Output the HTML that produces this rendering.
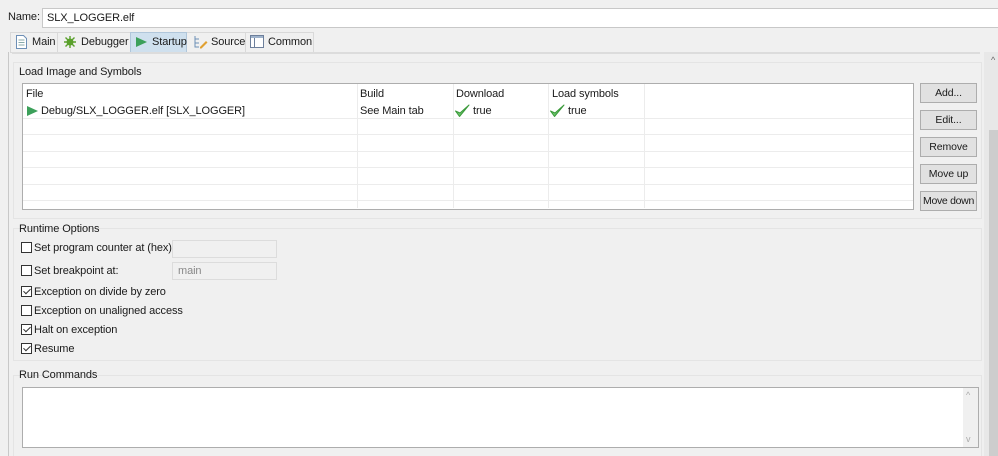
<!DOCTYPE html>
<html><head><style>
*{box-sizing:border-box;margin:0;padding:0}
html,body{width:998px;height:456px;overflow:hidden}
body{background:#f0f0f0;font-family:"Liberation Sans",sans-serif;font-size:11px;color:#1a1a1a;position:relative;white-space:nowrap;letter-spacing:-0.1px}
.a{position:absolute}
.cb{position:absolute;width:11px;height:11px;border:1px solid #333;background:#fff;left:21px}
.cb.c::after{content:"";position:absolute;left:3px;top:0px;width:3px;height:6px;border:solid #333;border-width:0 1px 1px 0;transform:rotate(45deg)}
.lbl{position:absolute;left:34px}
.btn{position:absolute;left:920px;width:57px;height:20px;background:#e1e1e1;border:1px solid #adadad;text-align:center;line-height:18px;font-size:10.5px}
.hl{position:absolute;left:23px;width:890px;height:1px;background:#ececec}
.vl{position:absolute;top:84px;height:124px;width:1px;background:#ececec}
</style></head><body>
<div class="a" style="left:8px;top:11px">Name:</div>
<div class="a" style="left:42px;top:8px;width:960px;height:20px;background:#fff;border:1px solid #c8c8c8;padding:3px 4px">SLX_LOGGER.elf</div>
<!-- tabs -->
<div class="a" style="left:10px;top:32px;width:304px;height:21px;background:#f0f0f0;border:1px solid #d9d9d9"></div>
<div class="a" style="left:130px;top:32px;width:57px;height:21px;background:#cfe0ee;border:1px solid #b0c6da"></div>
<svg class="a" style="left:15px;top:35px" width="13" height="14"><path d="M1.5 .5h7l3 3v10h-10z" fill="#fff" stroke="#6d8fb6"/><path d="M3.5 5h6M3.5 7.5h6M3.5 10h6" stroke="#8aa"/></svg>
<div class="a" style="left:32px;top:36px">Main</div>
<div class="a" style="left:57px;top:33px;width:1px;height:19px;background:#d9d9d9"></div>
<svg class="a" style="left:63px;top:35px" width="14" height="14"><circle cx="7" cy="7" r="3.5" fill="#5aa02c"/><path d="M7 1v12M1 7h12M2.5 2.5l9 9M11.5 2.5l-9 9" stroke="#5aa02c" stroke-width="1.4"/></svg>
<div class="a" style="left:81px;top:36px">Debugger</div>
<svg class="a" style="left:135px;top:36px" width="13" height="12"><path d="M1 1l11 5-11 5z" fill="#3ca05a"/></svg>
<div class="a" style="left:152px;top:36px">Startup</div>
<svg class="a" style="left:193px;top:35px" width="16" height="14"><path d="M2 1v11h4M2 4h4M2 8h4" stroke="#6d8fb6" fill="none"/><path d="M7 12l6-6 1.5 1.5-6 6H7z" fill="#e0a030"/></svg>
<div class="a" style="left:211px;top:36px">Source</div>
<div class="a" style="left:245px;top:33px;width:1px;height:19px;background:#d9d9d9"></div>
<svg class="a" style="left:250px;top:35px" width="14" height="13"><rect x=".5" y=".5" width="13" height="12" fill="#fff" stroke="#6d7f9b"/><rect x="1" y="1" width="12" height="2" fill="#9fb3cc"/><path d="M4.5 3v9" stroke="#6d7f9b"/></svg>
<div class="a" style="left:268px;top:36px">Common</div>
<!-- content frame -->
<div class="a" style="left:8px;top:52px;width:1px;height:404px;background:#c8c8c8"></div>
<div class="a" style="left:12px;top:52px;width:968px;height:2px;background:#dcdcdc"></div>
<!-- scrollbar -->
<div class="a" style="left:984px;top:52px;width:14px;height:404px;background:#e8e8e8"></div>
<div class="a" style="left:989px;top:130px;width:9px;height:326px;background:#cdcdcd"></div>
<div class="a" style="left:991px;top:55px;font-size:9px;color:#666">^</div>
<!-- group 1 -->
<div class="a" style="left:13px;top:62px;width:969px;height:157px;border:1px solid #e4e4e4"></div>
<div class="a" style="left:19px;top:66px">Load Image and Symbols</div>
<div class="a" style="left:22px;top:83px;width:892px;height:127px;background:#fff;border:1px solid #adadad"></div>
<div class="hl" style="top:118px"></div><div class="hl" style="top:134px"></div><div class="hl" style="top:151px"></div><div class="hl" style="top:167px"></div><div class="hl" style="top:184px"></div><div class="hl" style="top:200px"></div>
<div class="vl" style="left:357px"></div><div class="vl" style="left:453px"></div><div class="vl" style="left:548px"></div><div class="vl" style="left:644px"></div>
<div class="a" style="left:26px;top:88px">File</div>
<div class="a" style="left:360px;top:88px">Build</div>
<div class="a" style="left:456px;top:88px">Download</div>
<div class="a" style="left:552px;top:88px">Load symbols</div>
<svg class="a" style="left:26px;top:105px" width="13" height="12"><path d="M1 1l11 5-11 5z" fill="#3ca05a"/></svg>
<div class="a" style="left:41px;top:105px">Debug/SLX_LOGGER.elf [SLX_LOGGER]</div>
<div class="a" style="left:360px;top:105px">See Main tab</div>
<svg class="a" style="left:454px;top:103px" width="16" height="15"><path d="M1.5 8l4 5.5L15 2l-9 8z" fill="#6cc46c" stroke="#3a9a3a" stroke-linejoin="round"/></svg>
<div class="a" style="left:473px;top:105px">true</div>
<svg class="a" style="left:549px;top:103px" width="16" height="15"><path d="M1.5 8l4 5.5L15 2l-9 8z" fill="#6cc46c" stroke="#3a9a3a" stroke-linejoin="round"/></svg>
<div class="a" style="left:568px;top:105px">true</div>
<div class="btn" style="top:83px">Add...</div>
<div class="btn" style="top:110px">Edit...</div>
<div class="btn" style="top:137px">Remove</div>
<div class="btn" style="top:164px">Move up</div>
<div class="btn" style="top:191px;letter-spacing:-0.3px">Move down</div>
<!-- group 2 -->
<div class="a" style="left:13px;top:228px;width:969px;height:133px;border:1px solid #e4e4e4"></div>
<div class="a" style="left:19px;top:223px">Runtime Options</div>
<div class="cb" style="top:242px"></div><div class="lbl" style="top:242px">Set program counter at (hex):</div>
<div class="a" style="left:172px;top:240px;width:105px;height:18px;border:1px solid #dcdcdc;background:#f0f0f0"></div>
<div class="cb" style="top:265px"></div><div class="lbl" style="top:265px">Set breakpoint at:</div>
<div class="a" style="left:172px;top:262px;width:105px;height:18px;border:1px solid #dcdcdc;background:#f0f0f0;color:#888;padding:2px 5px">main</div>
<div class="cb c" style="top:286px"></div><div class="lbl" style="top:286px">Exception on divide by zero</div>
<div class="cb" style="top:305px"></div><div class="lbl" style="top:305px">Exception on unaligned access</div>
<div class="cb c" style="top:324px"></div><div class="lbl" style="top:324px">Halt on exception</div>
<div class="cb c" style="top:343px"></div><div class="lbl" style="top:343px">Resume</div>
<!-- group 3 -->
<div class="a" style="left:13px;top:375px;width:969px;height:81px;border:1px solid #e4e4e4;border-bottom:none"></div>
<div class="a" style="left:19px;top:369px">Run Commands</div>
<div class="a" style="left:22px;top:387px;width:957px;height:61px;background:#fff;border:1px solid #adadad"></div>
<div class="a" style="left:963px;top:388px;width:15px;height:59px;background:#f0f0f0"></div>
<div class="a" style="left:966px;top:390px;font-size:9px;color:#aaa">^</div>
<div class="a" style="left:966px;top:434px;font-size:9px;color:#aaa">v</div>
</body></html>
